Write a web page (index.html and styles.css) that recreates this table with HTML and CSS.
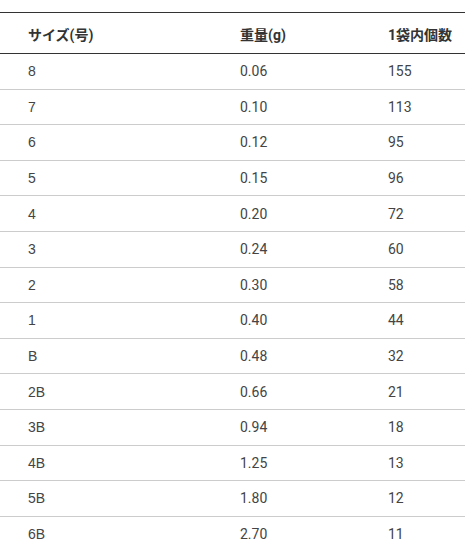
FILE: index.html
```html
<!DOCTYPE html>
<html lang="ja">
<head>
<meta charset="utf-8">
<link rel="stylesheet" href="styles.css">
</head>
<body>
<table class="spec">
  <thead>
    <tr><th class="c1">サイズ(号)</th><th class="c2">重量(g)</th><th class="c3">1袋内個数</th></tr>
  </thead>
  <tbody>
    <tr><td class="size">8</td><td>0.06</td><td>155</td></tr>
    <tr><td class="size">7</td><td>0.10</td><td>113</td></tr>
    <tr><td class="size">6</td><td>0.12</td><td>95</td></tr>
    <tr><td class="size">5</td><td>0.15</td><td>96</td></tr>
    <tr><td class="size">4</td><td>0.20</td><td>72</td></tr>
    <tr><td class="size">3</td><td>0.24</td><td>60</td></tr>
    <tr><td class="size">2</td><td>0.30</td><td>58</td></tr>
    <tr><td class="size">1</td><td>0.40</td><td>44</td></tr>
    <tr><td class="size">B</td><td>0.48</td><td>32</td></tr>
    <tr><td class="size">2B</td><td>0.66</td><td>21</td></tr>
    <tr><td class="size">3B</td><td>0.94</td><td>18</td></tr>
    <tr><td class="size">4B</td><td>1.25</td><td>13</td></tr>
    <tr><td class="size">5B</td><td>1.80</td><td>12</td></tr>
    <tr><td class="size">6B</td><td>2.70</td><td>11</td></tr>
  </tbody>
</table>
</body>
</html>
```
FILE: styles.css
```css
html, body {
  margin: 0;
  padding: 0;
  background: #fff;
}
body {
  padding-top: 12px;
  font-family: Roboto, "Noto Sans CJK JP", sans-serif;
  font-size: 14px;
  color: #444;
}
.spec {
  width: 465px;
  border-collapse: collapse;
  table-layout: fixed;
}
.spec th {
  height: 41px;
  box-sizing: border-box;
  text-align: left;
  font-weight: 700;
  color: #333;
  padding: 2px 0 0 28px;
  border-top: 1px solid #333;
  border-bottom: 1px solid #333;
  vertical-align: middle;
}
.spec .c1 { width: 212px; }
.spec .c2 { width: 148px; }
.spec .c3 { width: 105px; }
.spec td {
  height: 35.6px;
  box-sizing: border-box;
  padding: 0 0 0 28px;
  border-bottom: 1px solid #ccc;
  vertical-align: middle;
}
.spec td.size {
  font-family: "Liberation Sans", Arial, sans-serif;
}
```
